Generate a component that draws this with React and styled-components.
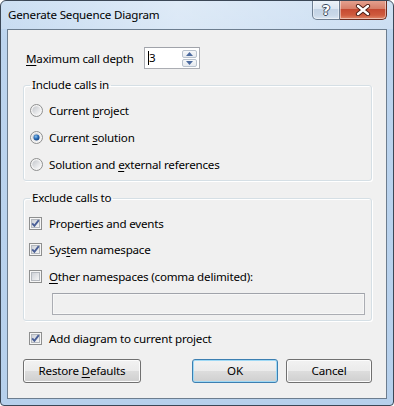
import React from 'react';
import styled, { createGlobalStyle } from 'styled-components';

const GlobalStyle = createGlobalStyle`
  html, body {
    margin: 0;
    padding: 0;
    background: #ffffff;
  }
  body {
    font-family: 'Segoe UI', 'Noto Sans', 'Open Sans', sans-serif;
    font-size: 11.6px;
    letter-spacing: -0.2px;
    color: #000000;
  }
`;

const Window = styled.div`
  width: 394px;
  height: 406px;
  box-sizing: border-box;
  display: flex;
  flex-direction: column;
  border: 1px solid #3b4756;
  border-radius: 6px 6px 4px 4px;
  background: linear-gradient(180deg, #c4daf1 0px, #bcd4ee 40px, #b6d0ec 100%);
  overflow: hidden;
`;

const TitleBar = styled.div`
  height: 28px;
  display: flex;
  justify-content: space-between;
  align-items: flex-start;
  background: linear-gradient(90deg, rgba(255,255,255,0.15) 0%, rgba(255,255,255,0.45) 45%, rgba(255,255,255,0.2) 100%);
`;

const Title = styled.div`
  padding: 6px 0 0 7px;
  line-height: 16px;
  color: #000000;
`;

const Captions = styled.div`
  display: flex;
  margin-right: 6px;
  margin-top: -1px;
`;

const CaptionButton = styled.div`
  width: ${(p) => p.$w}px;
  height: 20px;
  box-sizing: border-box;
  display: flex;
  align-items: center;
  justify-content: center;
  border: 1px solid ${(p) => (p.$close ? '#6b2b1f' : '#6e7f92')};
  border-top: none;
  border-left: ${(p) => (p.$close ? 'none' : '1px solid #6e7f92')};
  border-radius: ${(p) => (p.$close ? '0 0 5px 0' : '0 0 0 5px')};
  background: ${(p) =>
    p.$close
      ? 'linear-gradient(180deg, #e6a493 0%, #d77f69 45%, #c54a32 50%, #cf5b3e 80%, #e08a6d 100%)'
      : 'linear-gradient(180deg, #edf3f9 0%, #dbe6f2 45%, #c3d3e5 50%, #c9d8e8 80%, #dce7f3 100%)'};
  box-shadow: inset 0 0 0 1px rgba(255, 255, 255, 0.45);
`;

const HelpGlyph = styled.span`
  font-family: 'DejaVu Sans', sans-serif;
  font-weight: bold;
  font-size: 14px;
  line-height: 14px;
  letter-spacing: 0;
  color: #ffffff;
  text-shadow: -1px 0 #3a4a5c, 1px 0 #3a4a5c, 0 -1px #3a4a5c, 0 1px #3a4a5c;
`;

const Client = styled.div`
  flex: 1;
  margin: 0 6px 6px 6px;
  border: 1px solid #6c7d8f;
  background: #f0f0f0;
  padding: 17px 14px 0 15px;
  display: flex;
  flex-direction: column;
`;

const DepthRow = styled.div`
  display: flex;
  align-items: center;
  height: 22px;
  padding-left: 3px;
`;

const FieldLabel = styled.span`
  width: 118px;
`;

const U = styled.span`
  text-decoration: underline;
  text-underline-offset: 2px;
`;

const SpinBox = styled.div`
  width: 56px;
  height: 22px;
  box-sizing: border-box;
  border: 1px solid #abadb3;
  border-top-color: #a0a3aa;
  background: #ffffff;
  display: flex;
  align-items: center;
  justify-content: space-between;
  padding: 1px 1px 1px 2px;
`;

const SpinValue = styled.span`
  border-left: 1px solid #000000;
  line-height: 14px;
  margin-left: 1px;
`;

const SpinButtons = styled.div`
  display: flex;
  flex-direction: column;
  gap: 1px;
  margin-right: 1px;
`;

const SpinButton = styled.div`
  width: 15px;
  height: 8px;
  box-sizing: border-box;
  border: 1px solid #b9c2cd;
  border-radius: 2px;
  background: linear-gradient(180deg, #f6f8fa 0%, #e6eaef 100%);
  display: flex;
  align-items: center;
  justify-content: center;
`;

const Group = styled.fieldset`
  margin: ${(p) => p.$top}px 0 0 0;
  padding: 0 6px ${(p) => p.$bottom}px 5px;
  border: 1px solid #d5dfe5;
  border-radius: 3px;
  box-shadow: inset 1px 1px 0 #ffffff, 1px 1px 0 #ffffff;
  min-width: 0;
`;

const Legend = styled.legend`
  padding: 0 2px;
  margin-left: 1px;
  line-height: 16px;
`;

const OptionRow = styled.label`
  display: flex;
  align-items: center;
  gap: ${(p) => p.$gap || 7}px;
  height: ${(p) => p.$h || 27}px;
  padding-left: ${(p) => p.$indent || 0}px;
  margin-top: ${(p) => p.$top || 0}px;
`;

const Options = styled.div`
  display: flex;
  flex-direction: column;
  padding-top: ${(p) => p.$top}px;
`;

const TextField = styled.div`
  height: 22px;
  box-sizing: border-box;
  margin: 3px 0 1px 23px;
  border: 1px solid #abadb3;
  border-top-color: #a0a3aa;
  background: #f0f0f0;
  box-shadow: inset 0 0 0 1px #f7f7f7;
`;

const ButtonRow = styled.div`
  display: flex;
  gap: 8px;
  margin-top: 7px;
`;

const Button = styled.div`
  width: ${(p) => p.$w}px;
  height: 24px;
  box-sizing: border-box;
  display: flex;
  align-items: center;
  justify-content: center;
  border: 1px solid ${(p) => (p.$default ? '#3c7fb1' : '#707070')};
  border-radius: 3px;
  margin-left: ${(p) => (p.$push ? 'auto' : '0')};
  background: linear-gradient(180deg, #f2f2f2 0%, #ebebeb 49%, #dddddd 50%, #cfcfcf 100%);
  box-shadow: inset 0 0 0 1px ${(p) => (p.$default ? '#9fd9f5' : '#fcfcfc')};
`;

function CheckBox({ checked }) {
  return (
    <svg width="13" height="13" viewBox="0 0 13 13">
      <defs>
        <linearGradient id="cbInner" x1="0" y1="0" x2="1" y2="1">
          <stop offset="0" stopColor="#cbcfd5" />
          <stop offset="1" stopColor="#f7f7f7" />
        </linearGradient>
      </defs>
      <rect x="0.5" y="0.5" width="12" height="12" fill="#f6f6f6" stroke="#8e8f8f" />
      <rect x="2.5" y="2.5" width="8" height="8" fill="url(#cbInner)" stroke="#b4b8be" />
      {checked && (
        <path d="M3.2 6.4 L5.4 8.8 L9.8 3.2" fill="none" stroke="#4a5f97" strokeWidth="1.9" />
      )}
    </svg>
  );
}

function Radio({ checked }) {
  return (
    <svg width="13" height="13" viewBox="0 0 13 13">
      <defs>
        <linearGradient id="rdInner" x1="0" y1="0" x2="1" y2="1">
          <stop offset="0" stopColor="#c4c7cc" />
          <stop offset="1" stopColor="#fbfbfb" />
        </linearGradient>
        <radialGradient id="rdDot" cx="0.4" cy="0.35" r="0.7">
          <stop offset="0" stopColor="#8cc6f2" />
          <stop offset="0.5" stopColor="#2d6fb8" />
          <stop offset="1" stopColor="#123e7c" />
        </radialGradient>
      </defs>
      <circle cx="6.5" cy="6.5" r="6" fill="#f4f4f4" stroke="#8e8f8f" />
      <circle cx="6.5" cy="6.5" r="4.2" fill="url(#rdInner)" />
      {checked && <circle cx="6.5" cy="6.5" r="3" fill="url(#rdDot)" />}
    </svg>
  );
}

function Arrow({ up }) {
  return (
    <svg width="7" height="4" viewBox="0 0 7 4">
      <path d={up ? 'M0 4 L3.5 0 L7 4 Z' : 'M0 0 L3.5 4 L7 0 Z'} fill="#4d6b9f" />
    </svg>
  );
}

function CloseGlyph() {
  return (
    <svg width="16" height="12" viewBox="0 0 16 12">
      <path d="M3 2 L13 10 M13 2 L3 10" stroke="#4a1c14" strokeWidth="4.2" strokeLinecap="round" />
      <path d="M3 2 L13 10 M13 2 L3 10" stroke="#ffffff" strokeWidth="2.4" strokeLinecap="round" />
    </svg>
  );
}

export default function App() {
  return (
    <>
      <GlobalStyle />
      <Window>
        <TitleBar>
          <Title>Generate Sequence Diagram</Title>
          <Captions>
            <CaptionButton $w={28}>
              <HelpGlyph>?</HelpGlyph>
            </CaptionButton>
            <CaptionButton $w={47} $close>
              <CloseGlyph />
            </CaptionButton>
          </Captions>
        </TitleBar>
        <Client>
          <DepthRow>
            <FieldLabel>
              <U>M</U>aximum call depth
            </FieldLabel>
            <SpinBox>
              <SpinValue>3</SpinValue>
              <SpinButtons>
                <SpinButton>
                  <Arrow up />
                </SpinButton>
                <SpinButton>
                  <Arrow />
                </SpinButton>
              </SpinButtons>
            </SpinBox>
          </DepthRow>

          <Group $top={8} $bottom={2}>
            <Legend>Include calls in</Legend>
            <Options $top={4}>
              <OptionRow $indent={1} $gap={6}>
                <Radio />
                <span>
                  Current <U>p</U>roject
                </span>
              </OptionRow>
              <OptionRow $indent={1} $gap={6}>
                <Radio checked />
                <span>
                  Current <U>s</U>olution
                </span>
              </OptionRow>
              <OptionRow $indent={1} $gap={6}>
                <Radio />
                <span>
                  Solution and <U>e</U>xternal references
                </span>
              </OptionRow>
            </Options>
          </Group>

          <Group $top={9} $bottom={4}>
            <Legend>Exclude calls to</Legend>
            <Options $top={4}>
              <OptionRow $h={26.5}>
                <CheckBox checked />
                <span>
                  Propert<U>i</U>es and events
                </span>
              </OptionRow>
              <OptionRow $h={26.5}>
                <CheckBox checked />
                <span>
                  Sys<U>t</U>em namespace
                </span>
              </OptionRow>
              <OptionRow $h={26.5}>
                <CheckBox />
                <span>
                  <U>O</U>ther namespaces (comma delimited):
                </span>
              </OptionRow>
            </Options>
            <TextField />
          </Group>

          <OptionRow $h={26} $indent={6} $top={5}>
            <CheckBox checked />
            <span>Add diagram to current project</span>
          </OptionRow>

          <ButtonRow>
            <Button $w={118}>
              <span>
                Restore <U>D</U>efaults
              </span>
            </Button>
            <Button $w={86} $push $default>
              OK
            </Button>
            <Button $w={86}>Cancel</Button>
          </ButtonRow>
        </Client>
      </Window>
    </>
  );
}
